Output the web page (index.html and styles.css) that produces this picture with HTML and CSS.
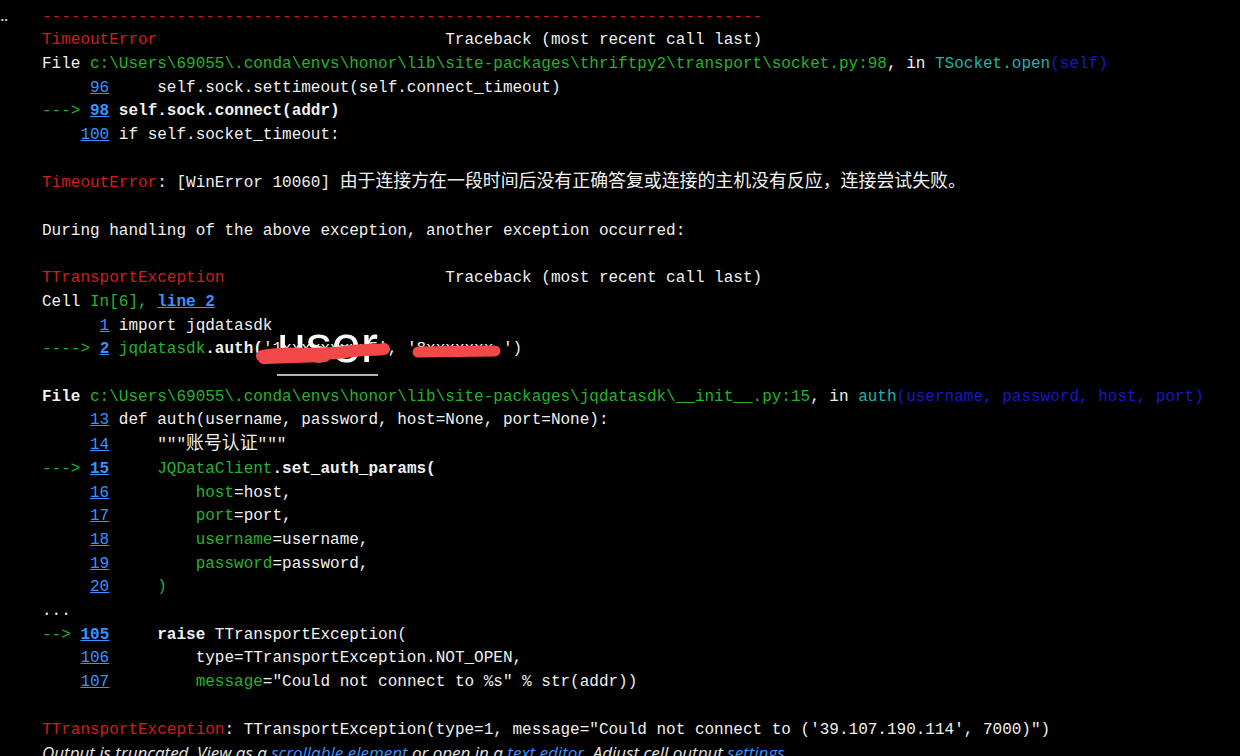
FILE: index.html
```html
<!DOCTYPE html>
<html lang="en">
<head>
    <meta charset="UTF-8">
    <meta name="viewport" content="width=device-width, initial-scale=1.0">
    <title>Cell output</title>
    <link rel="stylesheet" href="styles.css">
</head>
<body>
    <div class="cell">
        <div class="gutter">...</div>
        <div class="output">
<pre class="trace"><span class="r">---------------------------------------------------------------------------</span>
<span class="r">TimeoutError</span>                              Traceback (most recent call last)
File <span class="g">c:\Users\69055\.conda\envs\honor\lib\site-packages\thriftpy2\transport\socket.py:98</span>, in <span class="c">TSocket.open</span><span class="b">(self)</span>
     <a class="ln">96</a>     self.sock.settimeout(self.connect_timeout)
<span class="g">---&gt;</span> <a class="ln w">98</a> <b>self.sock.connect(addr)</b>
    <a class="ln">100</a> if self.socket_timeout:

<span class="r">TimeoutError</span>: [WinError 10060] <span class="cjk">由于连接方在一段时间后没有正确答复或连接的主机没有反应，连接尝试失败。</span>

During handling of the above exception, another exception occurred:

<span class="r">TTransportException</span>                       Traceback (most recent call last)
Cell <span class="g">In[6], </span><a class="ln w">line 2</a>
      <a class="ln">1</a> import jqdatasdk
<span class="g">----&gt;</span> <a class="ln w">2</a> <span class="g">jqdatasdk</span><b>.auth(</b><span class="mask"><span class="user">user</span><span class="user-line"></span><svg class="scribble" width="250" height="26" viewBox="0 0 250 26"><path d="M7 18 C30 13, 60 18, 90 14 S120 13, 129 11" /><path d="M9 20 L70 18" /><path d="M163 14 L240 13" class="thick" /></svg></span>'1xxxxxxxxx5', '8xxxxxxx.')

<b>File</b> <span class="g">c:\Users\69055\.conda\envs\honor\lib\site-packages\jqdatasdk\__init__.py:15</span>, in <span class="c">auth</span><span class="b">(username, password, host, port)</span>
     <a class="ln">13</a> def auth(username, password, host=None, port=None):
     <a class="ln">14</a>     """<span class="cjk">账号认证</span>"""
<span class="g">---&gt;</span> <a class="ln w">15</a>     <span class="g">JQDataClient</span><b>.set_auth_params(</b>
     <a class="ln">16</a>         <span class="g">host</span>=host,
     <a class="ln">17</a>         <span class="g">port</span>=port,
     <a class="ln">18</a>         <span class="g">username</span>=username,
     <a class="ln">19</a>         <span class="g">password</span>=password,
     <a class="ln">20</a>     <span class="g">)</span>
...
<span class="g">--&gt;</span> <a class="ln w">105</a>     <b>raise</b> TTransportException(
    <a class="ln">106</a>         type=TTransportException.NOT_OPEN,
    <a class="ln">107</a>         <span class="g">message</span>="Could not connect to %s" % str(addr))

<span class="r">TTransportException</span>: TTransportException(type=1, message="Could not connect to ('39.107.190.114', 7000)")</pre>
            <p class="truncated">Output is truncated. View as a <a href="#">scrollable element</a> or open in a <a href="#">text editor</a>. Adjust cell output <a href="#">settings</a>...</p>
        </div>
    </div>
</body>
</html>
```

FILE: styles.css
```css
body {
    margin: 0;
    background: #000;
    color: #f0f0f0;
    overflow: hidden;
}
.cell {
    display: flex;
}
.gutter {
    width: 45px;
    flex: none;
    padding-top: 5px;
    margin-left: -3px;
    font-family: "Liberation Sans", sans-serif;
    font-size: 13px;
    font-weight: bold;
    line-height: 23.75px;
    color: #d8d8d8;
}
.output {
    flex: 1;
}
.trace {
    margin: 0;
    padding-top: 5.5px;
    font-family: "Liberation Mono", monospace;
    font-size: 16px;
    line-height: 23.7px;
    white-space: pre;
}
.trace b, .w {
    font-weight: bold;
}
.r {
    color: #d01c1c;
}
.g {
    color: #22b42a;
}
.c {
    color: #1fb3ad;
}
.b {
    color: #1818c8;
}
.ln {
    color: #3794ff;
    text-decoration: underline;
}
.cjk {
    font-family: "Noto Sans CJK SC", sans-serif;
    font-size: 17.9px;
    line-height: 1;
}
.mask {
    position: relative;
    display: inline-block;
    width: 0;
    height: 23.7px;
    vertical-align: top;
}
.user {
    position: absolute;
    left: 14px;
    top: -20px;
    font-family: "Liberation Sans", sans-serif;
    font-size: 52px;
    line-height: 52px;
    color: #fafafa;
}
.user-line {
    position: absolute;
    left: 14px;
    top: 36px;
    width: 101px;
    height: 2px;
    background: #b4b4b4;
}
.scribble {
    position: absolute;
    left: -8px;
    top: 0;
}
.scribble path {
    fill: none;
    stroke: #f24848;
    stroke-width: 12;
    stroke-linecap: round;
}
.scribble path.thick {
    stroke-width: 11;
}
.truncated {
    margin: 0;
    font-family: "Open Sans", sans-serif;
    font-size: 17px;
    font-style: italic;
    line-height: 22px;
    color: #e8e8e8;
}
.truncated a {
    color: #3794ff;
    text-decoration: none;
}
```
